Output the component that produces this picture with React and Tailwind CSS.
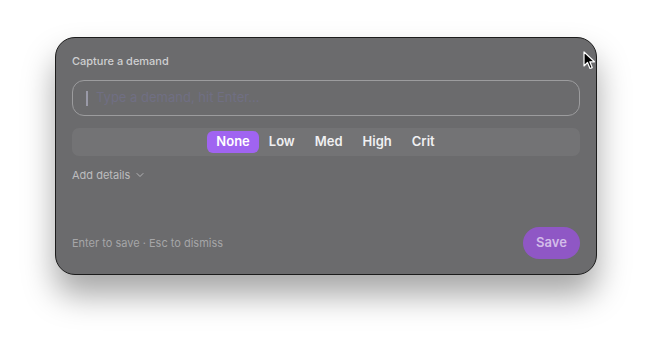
import { ChevronDown } from "lucide-react";

const levels = ["None", "Low", "Med", "High", "Crit"];

export default function App() {
    return (
        <div className="relative w-full h-[348px] bg-white pt-[37px] pl-[55px]" style={{ fontFamily: "Inter, 'Noto Sans', sans-serif" }}>
            <div className="w-[542px] h-[238px] rounded-[20px] border border-[#1c1c1c] bg-[#6b6b6d] shadow-[0_20px_32px_rgba(0,0,0,0.35)] flex flex-col px-[16px] pt-[16px] pb-[15px]">
                {/* ── header ── */}
                <div className="text-[11px] leading-[14px] text-[#cfcfd1] font-medium">Capture a demand</div>

                {/* ── input ── */}
                <div className="mt-[12px] h-[36px] rounded-[12px] border border-[#9c9c9e] flex items-center pl-[13px]">
                    <div className="w-[2px] h-[15px] bg-[#9a9aa8] mr-[8px]" />
                    <span className="text-[13px] text-[#75739a] opacity-50">Type a demand, hit Enter…</span>
                </div>

                {/* ── priority ── */}
                <div className="mt-[12px] h-[28px] rounded-[7px] bg-[#737375] flex items-center justify-center">
                    {levels.map((l, i) => (
                        <div
                            key={l}
                            className={
                                i === 0
                                    ? "h-[22px] px-[9px] rounded-[6px] bg-[#a064f1] text-white text-[13px] font-semibold flex items-center"
                                    : "h-[22px] px-[10px] rounded-[6px] text-[#f0f0f2] text-[13px] font-semibold flex items-center"
                            }
                        >
                            {l}
                        </div>
                    ))}
                </div>

                {/* ── details ── */}
                <div className="mt-[11px] flex items-center gap-[4px] text-[11px] text-[#bdbdbf]">
                    Add details
                    <ChevronDown size={12} strokeWidth={1.75} />
                </div>

                {/* ── footer ── */}
                <div className="mt-auto flex items-center justify-between">
                    <span className="text-[11px] text-[#a6a6a8]">Enter to save · Esc to dismiss</span>
                    <div className="h-[32px] w-[57px] rounded-full bg-[#8f57c5] text-[#d3bce9] text-[13px] font-semibold flex items-center justify-center">
                        Save
                    </div>
                </div>
            </div>

            {/* mouse cursor */}
            <svg className="absolute left-[583px] top-[51px]" width="14" height="20" viewBox="0 0 14 20">
                <path d="M1 1 L1 15 L4.5 11.5 L7 17.5 L9.2 16.6 L6.8 10.8 L11.5 10.8 Z" fill="#000" stroke="#fff" strokeWidth="1.2" strokeLinejoin="round" />
            </svg>
        </div>
    );
}
